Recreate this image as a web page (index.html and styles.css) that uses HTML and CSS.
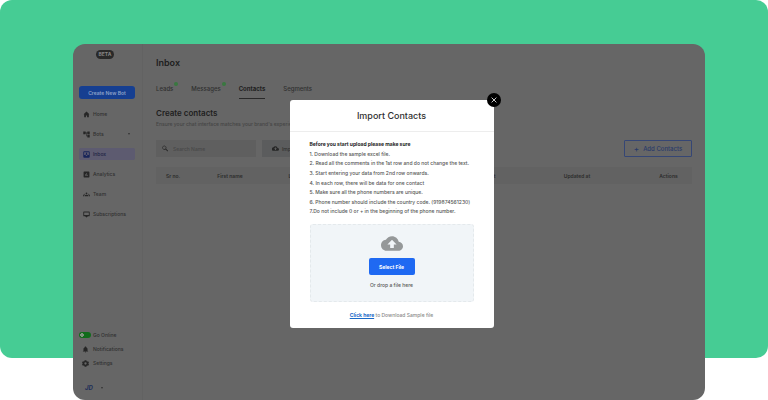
FILE: index.html
```html
<!DOCTYPE html>
<html lang="en">
<head>
<meta charset="utf-8">
<meta name="viewport" content="width=device-width, initial-scale=1">
<title>Inbox – Contacts</title>
<link rel="stylesheet" href="styles.css">
</head>
<body>
<div class="banner"></div>
<div class="app">
  <aside class="sidebar">
    <div class="brand"><span class="beta">BETA</span></div>
    <button class="create" type="button">Create New Bot</button>
    <nav class="menu">
      <a class="item" href="#"><svg class="icon" viewBox="0 0 24 24"><path d="M12 2 2 11h2v10h6v-6h4v6h6V11h2z"/></svg>Home</a>
      <a class="item" href="#"><svg class="icon" viewBox="0 0 24 24"><path d="M23 11V2h-8v3H9V2H1v9h8V8h2v10h4v4h8v-9h-8v3h-2V8h2v3z"/></svg>Bots<span class="caret"></span></a>
      <a class="item active" href="#"><svg class="icon" viewBox="0 0 24 24"><path fill-rule="evenodd" d="M20 1H4a3 3 0 0 0-3 3v16a3 3 0 0 0 3 3h16a3 3 0 0 0 3-3V4a3 3 0 0 0-3-3zm0 13h-5a3 3 0 0 1-6 0H4V4h16zm-3-4h-3V6h-4v4H7l5 4z"/></svg>Inbox</a>
      <a class="item" href="#"><svg class="icon" viewBox="0 0 24 24"><path fill-rule="evenodd" d="M20 2H4a2 2 0 0 0-2 2v16a2 2 0 0 0 2 2h16a2 2 0 0 0 2-2V4a2 2 0 0 0-2-2zM9 17H7v-7h2zm4 0h-2V7h2zm4 0h-2v-4h2z"/></svg>Analytics</a>
      <a class="item" href="#"><svg class="icon" viewBox="0 0 24 24"><circle cx="12" cy="8" r="3"/><circle cx="4" cy="11" r="2"/><circle cx="20" cy="11" r="2"/><path d="M6 18v-2c0-4 12-4 12 0v2zM0 18v-2c0-2 2-3 5-2-1 1-1 2-1 4zM24 18v-2c0-2-2-3-5-2 1 1 1 2 1 4z"/></svg>Team</a>
      <a class="item" href="#"><svg class="icon" viewBox="0 0 24 24"><path fill-rule="evenodd" d="M21 2H3a2 2 0 0 0-2 2v12c0 1 1 2 2 2h4l5 4 5-4h4c1 0 2-1 2-2V4a2 2 0 0 0-2-2zm-1 12H4V5h16z"/></svg>Subscriptions</a>
    </nav>
    <div class="utilities">
      <label class="utility"><input class="switch" type="checkbox" role="switch" checked>Go Online</label>
      <a class="utility" href="#"><svg class="icon" viewBox="0 0 24 24"><path d="M12 22a2 2 0 0 0 2-2h-4a2 2 0 0 0 2 2zm7-6v-5c0-4-2-6-5-7V2h-4v2c-3 1-5 3-5 7v5l-2 2v1h18v-1z"/></svg>Notifications</a>
      <a class="utility" href="#"><svg class="icon" viewBox="0 0 24 24"><path fill-rule="evenodd" d="M9 1h6l1 3 2 1 3-1 3 5-2 2v2l2 2-3 5-3-1-2 1-1 3H9l-1-3-2-1-3 1-3-5 2-2v-2L0 9l3-5 3 1 2-1zm3 7a4 4 0 1 0 0 8 4 4 0 0 0 0-8z"/></svg>Settings</a>
      <button class="account" type="button"><span class="avatar">JD</span><span class="caret"></span></button>
    </div>
  </aside>
  <main class="main">
    <h1>Inbox</h1>
    <nav class="tabs">
      <a href="#">Leads<span class="badge"></span></a>
      <a href="#">Messages<span class="badge"></span></a>
      <a class="current" href="#">Contacts</a>
      <a href="#">Segments</a>
    </nav>
    <h2>Create contacts</h2>
    <p class="intro">Ensure your chat interface matches your brand's experience</p>
    <div class="toolbar">
      <label class="search"><svg class="icon" viewBox="0 0 24 24"><path fill-rule="evenodd" d="M14 13a7 7 0 1 0-2 2l7 7 2-2zM8 14a5 5 0 1 1 0-10 5 5 0 0 1 0 10z"/></svg><input type="search" placeholder="Search Name" aria-label="Search name"></label>
      <button class="import" type="button"><svg class="icon" viewBox="0 0 24 24"><path fill-rule="evenodd" d="M19 10A7.500 7.500 0 0 0 5 8a6 6 0 0 0 1 12h13a5 5 0 0 0 0-10zm-5 3v4h-4v-4H7l5-5 5 5z"/></svg>Import</button>
      <button class="add" type="button"><span class="plus">+</span>Add Contacts</button>
    </div>
    <table>
      <colgroup><col class="col-number"><col class="col-first"><col class="col-last"><col><col class="col-created"><col class="col-updated"><col class="col-actions"></colgroup>
      <thead><tr><th>Sr no.</th><th>First name</th><th>Last name</th><td></td><th>Created at</th><th>Updated at</th><th>Actions</th></tr></thead>
    </table>
  </main>
  <div class="overlay">
    <section class="modal" role="dialog" aria-labelledby="modal-title">
      <button class="close" type="button" aria-label="Close"><svg viewBox="0 0 10 10"><path d="m2 2 6 6M8 2 2 8"/></svg></button>
      <h2 class="modal-title" id="modal-title">Import Contacts</h2>
      <div class="modal-body">
        <div class="rules">
          <strong>Before you start upload please make sure</strong>
          <span>1. Download the sample excel file.</span>
          <span>2. Read all the comments in the 1st row and do not change the text.</span>
          <span>3. Start entering your data from 2nd row onwards.</span>
          <span>4. In each row, there will be data for one contact</span>
          <span>5. Make sure all the phone numbers are unique.</span>
          <span>6. Phone number should include the country code. (919874561230)</span>
          <span>7.Do not include 0 or + in the beginning of the phone number.</span>
        </div>
        <div class="dropzone">
          <svg class="cloud" viewBox="0 4 24 16"><path d="M19.350 10.040C18.670 6.590 15.640 4 12 4 9.110 4 6.600 5.640 5.350 8.040 2.340 8.360 0 10.910 0 14c0 3.310 2.690 6 6 6h13c2.760 0 5-2.240 5-5 0-2.640-2.050-4.780-4.650-4.960zM14 13v4h-4v-4H7l5-5 5 5z"/></svg>
          <button class="select" type="button">Select File</button>
          <span>Or drop a file here</span>
        </div>
        <p class="sample"><a href="#">Click here</a> to Download Sample file</p>
      </div>
    </section>
  </div>
</div>
</body>
</html>
```
FILE: styles.css
```css
* { box-sizing: border-box; margin: 0; padding: 0; }
body {
  min-height: 100vh;
  display: grid;
  background: #fff;
  font: 500 5px/10px Inter, "Liberation Sans", sans-serif;
  color: #303030;
}
button, input { font: inherit; color: inherit; border: 0; background: none; }
a { color: inherit; text-decoration: none; }
.banner, .app { grid-area: 1 / 1; }
.banner { margin-bottom: 42px; border-radius: 12px; background: #46cc94; }
.app {
  position: relative;
  display: flex;
  margin: 44px 63px 0 73px;
  overflow: hidden;
  border-radius: 12px;
  background: #666;
}
.icon { width: 7px; height: 7px; flex: none; fill: #262626; }
.caret { border: 1px solid transparent; border-top: 2px solid #333; border-bottom: 0; }

.sidebar {
  width: 70px;
  flex: none;
  display: flex;
  flex-direction: column;
  padding: 6px 7px 4px 6px;
  border-right: 1px solid #626262;
}
.brand { height: 36px; padding-left: 17px; }
.beta {
  display: block;
  width: 18px;
  border-radius: 5px;
  background: #292929;
  color: #858585;
  line-height: 9px;
  font-weight: 700;
  text-align: center;
}
.create { height: 13px; border-radius: 3px; background: #163f91; color: #8ea2c8; font-weight: 600; }
.menu { display: flex; flex-direction: column; gap: 8px; padding-top: 9px; }
.item { height: 12px; display: flex; align-items: center; gap: 3px; padding: 0 5px 0 4px; border-radius: 2px; }
.item .caret { margin-left: auto; }
.active { background: #5d5b70; color: #202343; }
.active .icon { fill: #172459; }
.utilities { margin-top: auto; display: flex; flex-direction: column; gap: 4px; }
.utility { display: flex; align-items: center; gap: 4px; padding-left: 3px; }
.utility:first-child { padding-left: 0; gap: 2px; }
.switch { appearance: none; width: 12px; height: 6px; border-radius: 3px; background: radial-gradient(circle at 3px 3px, #7d947d 2px, #106c1b 2px); }
.account { display: flex; align-items: center; gap: 7px; margin-top: 8px; padding-left: 5px; }
.avatar { width: 10px; line-height: 16px; color: #202e58; font-size: 6px; font-weight: 700; font-style: italic; }

.main { flex: 1; min-width: 0; padding: 12px 13px 0 13px; }
h1 { font-size: 9px; line-height: 14px; font-weight: 600; color: #202020; }
.tabs { display: flex; gap: 18px; margin-top: 14px; font-size: 6px; }
.tabs a { position: relative; height: 15px; }
.tabs .current { border-bottom: 1px solid #292929; color: #202020; font-weight: 700; }
.badge { position: absolute; top: -2px; right: -5px; width: 4px; height: 4px; border-radius: 2px; background: #397840; }
.main h2 { margin-top: 8px; font-size: 8px; line-height: 12px; font-weight: 600; color: #202020; }
.intro { color: #454545; }
.toolbar { display: flex; gap: 6px; margin-top: 11px; }
.search { width: 100px; height: 17px; display: flex; align-items: center; gap: 4px; padding-left: 6px; background: #5f5f5f; }
.search input { width: 80px; min-width: 0; outline: 0; }
.search input::placeholder { color: #484848; }
.import { width: 60px; display: flex; align-items: center; gap: 3px; padding-left: 10px; background: #5b5c5d; }
.add { width: 68px; display: flex; justify-content: center; align-items: center; gap: 4px; margin-left: auto; border: 1px solid #354675; border-radius: 1px; color: #293a6a; font-size: 6px; }
.plus { font-size: 8px; }
table { width: 100%; margin-top: 10px; border-collapse: collapse; table-layout: fixed; background: #626262; }
th { height: 17px; font-weight: 600; text-align: center; color: #2c2c2c; }
.col-number { width: 34px; }
.col-first { width: 80px; }
.col-last { width: 62px; }
.col-created { width: 52px; }
.col-updated { width: 136px; }
.col-actions { width: 47px; }

.overlay { position: absolute; inset: 0; display: flex; justify-content: center; align-items: flex-start; padding: 56px 0 0 5px; }
.modal { position: relative; width: 204px; border-radius: 3px; background: #fff; }
.close { position: absolute; top: -7px; right: -7px; width: 14px; height: 14px; display: grid; place-items: center; border-radius: 50%; background: #000; }
.close svg { width: 8px; height: 8px; stroke: #fff; fill: none; }
.modal-title { padding: 9px 0 8px; border-bottom: 1px solid #ededed; font-size: 9px; line-height: 14px; font-weight: 500; text-align: center; color: #303030; }
.modal-body { padding: 8px 20px; }
.rules { display: grid; grid-auto-rows: 1fr; height: 77px; line-height: 9px; white-space: nowrap; color: #555; }
.rules strong { color: #222; }
.dropzone { display: flex; flex-direction: column; align-items: center; margin-top: 7px; padding: 11px 0; border: 1px dashed #e4e9ec; border-radius: 3px; background: #f1f5f8; color: #555; }
.cloud { width: 22px; height: 15px; fill: #959899; }
.select { width: 46px; height: 17px; margin: 7px 0 5px; border-radius: 2px; background: #1f69f2; color: #fff; font-weight: 700; }
.sample { margin-top: 8px; text-align: center; color: #888; }
.sample a { color: #1a69c7; font-weight: 700; text-decoration: underline; }
```
